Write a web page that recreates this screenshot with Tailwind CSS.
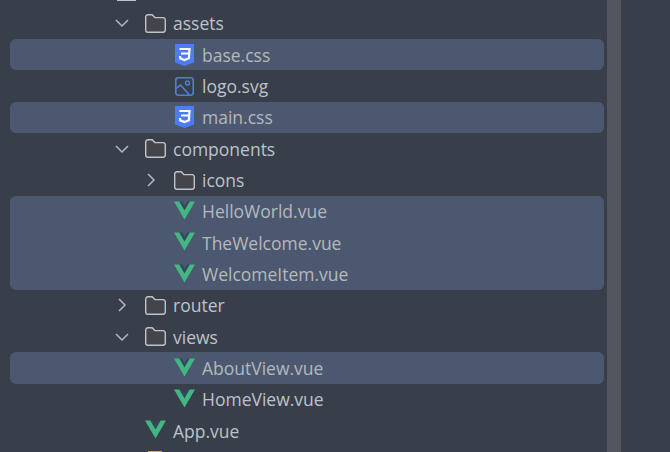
<!DOCTYPE html>
<html lang="en">
<head>
<meta charset="UTF-8">
<title>Project tree</title>
<script src="https://cdn.jsdelivr.net/npm/@tailwindcss/browser@4"></script>
</head>
<body class="m-0 w-[670px] h-[452px] overflow-hidden bg-[#383e4a] font-['Open_Sans','Noto_Sans',sans-serif] text-[17.5px] text-[#bcc3cc]">
<svg class="hidden">
  <symbol id="folder" viewBox="0 0 21 19"><path d="M.7 3a2.200 2.200 0 0 1 2.200-2.200h4.300l2.700 2.800h8a2.200 2.200 0 0 1 2.400 2.200v10a2.200 2.200 0 0 1-2.200 2.400H2.900A2.200 2.200 0 0 1 .7 16z" fill="#43454a" stroke="#c0c3c8" stroke-width="1.400"/></symbol>
  <symbol id="vue" viewBox="0 0 256 221"><path d="M60 0L128 118 196 0h-40L128 51.200 100 0z" fill="#35495e"/><path d="M192 0H256L128 220.800 0 0h64L128 112 192 0z" fill="#41b883"/></symbol>
  <symbol id="css" viewBox="0 0 19 22"><path d="M0 0h19v18.500L9.500 22 0 18.500z" fill="#4d7cf5"/><path d="M4.500 5h10l-.6 9.300-4.400 1.700-4.200-1.600-.2-2.400M6 9.500h8" fill="none" stroke="#fff" stroke-width="2.200"/></symbol>
  <symbol id="img" viewBox="0 0 19 19"><rect x=".8" y=".8" width="17.400" height="17.400" rx="2.500" fill="none" stroke="#4f7fd8" stroke-width="1.600"/><circle cx="12.500" cy="6" r="2" fill="none" stroke="#4f7fd8" stroke-width="1.400"/><path d="M1 11.500l4.500-3.500 9.500 10.500" fill="none" stroke="#4f7fd8" stroke-width="1.600"/></symbol>
  <symbol id="down" viewBox="0 0 16 16"><path d="M2 5l6 6 6-6" fill="none" stroke="#b4b8be" stroke-width="1.500"/></symbol>
  <symbol id="right" viewBox="0 0 16 16"><path d="M5 2l6 6-6 6" fill="none" stroke="#b4b8be" stroke-width="1.500"/></symbol>
</svg>

<div class="flex h-full overflow-hidden">
  <div class="w-[604px] shrink-0 -mt-[23.600px]">
    <div class="h-[31.330px] flex items-center pl-[117px]">
      <div class="w-[19px] h-[17px] border-b-2 border-[#c0c3c8]"></div>
    </div>

    <!-- assets -->
    <div class="h-[31.330px] flex items-center pl-[114px]">
      <svg class="w-4 h-4"><use href="#down"/></svg>
      <svg class="w-[21px] h-[19px] ml-[15px]"><use href="#folder"/></svg>
      <span class="ml-[7px]">assets</span>
    </div>
    <div class="ml-[10px] h-[31.330px] flex items-center pl-[165px] bg-[#4c5870] rounded-md text-[#b4b8bc]">
      <svg class="w-[19px] h-[22px]"><use href="#css"/></svg>
      <span class="ml-[8px]">base.css</span>
    </div>
    <div class="ml-[10px] h-[31.330px] flex items-center pl-[165px]">
      <svg class="w-[19px] h-[19px]"><use href="#img"/></svg>
      <span class="ml-[8px]">logo.svg</span>
    </div>
    <div class="ml-[10px] h-[31.330px] flex items-center pl-[165px] bg-[#4c5870] rounded-md text-[#b4b8bc]">
      <svg class="w-[19px] h-[22px]"><use href="#css"/></svg>
      <span class="ml-[8px]">main.css</span>
    </div>

    <!-- components -->
    <div class="h-[31.330px] flex items-center pl-[114px]">
      <svg class="w-4 h-4"><use href="#down"/></svg>
      <svg class="w-[21px] h-[19px] ml-[15px]"><use href="#folder"/></svg>
      <span class="ml-[7px]">components</span>
    </div>
    <div class="h-[31.330px] flex items-center pl-[143px]">
      <svg class="w-4 h-4"><use href="#right"/></svg>
      <svg class="w-[21px] h-[19px] ml-[15px]"><use href="#folder"/></svg>
      <span class="ml-[7px]">icons</span>
    </div>
    <div class="ml-[10px] bg-[#4c5870] rounded-md text-[#b4b8bc]">
      <div class="h-[31.330px] flex items-center pl-[164px]">
        <svg class="w-[21px] h-[19px] -mt-[2px]"><use href="#vue"/></svg>
        <span class="ml-[7px]">HelloWorld.vue</span>
      </div>
      <div class="h-[31.330px] flex items-center pl-[164px]">
        <svg class="w-[21px] h-[19px] -mt-[2px]"><use href="#vue"/></svg>
        <span class="ml-[7px]">TheWelcome.vue</span>
      </div>
      <div class="h-[31.330px] flex items-center pl-[164px]">
        <svg class="w-[21px] h-[19px] -mt-[2px]"><use href="#vue"/></svg>
        <span class="ml-[7px]">WelcomeItem.vue</span>
      </div>
    </div>

    <!-- router, views -->
    <div class="h-[31.330px] flex items-center pl-[114px]">
      <svg class="w-4 h-4"><use href="#right"/></svg>
      <svg class="w-[21px] h-[19px] ml-[15px]"><use href="#folder"/></svg>
      <span class="ml-[7px]">router</span>
    </div>
    <div class="h-[31.330px] flex items-center pl-[114px]">
      <svg class="w-4 h-4"><use href="#down"/></svg>
      <svg class="w-[21px] h-[19px] ml-[15px]"><use href="#folder"/></svg>
      <span class="ml-[7px]">views</span>
    </div>
    <div class="ml-[10px] h-[31.330px] flex items-center pl-[164px] bg-[#4c5870] rounded-md text-[#b4b8bc]">
      <svg class="w-[21px] h-[19px] -mt-[2px]"><use href="#vue"/></svg>
      <span class="ml-[7px]">AboutView.vue</span>
    </div>
    <div class="ml-[10px] h-[31.330px] flex items-center pl-[164px]">
      <svg class="w-[21px] h-[19px] -mt-[2px]"><use href="#vue"/></svg>
      <span class="ml-[7px]">HomeView.vue</span>
    </div>
    <div class="h-[31.330px] flex items-center pl-[145px]">
      <svg class="w-[21px] h-[19px] -mt-[2px]"><use href="#vue"/></svg>
      <span class="ml-[7px]">App.vue</span>
    </div>
    <div class="h-[31.330px] flex items-center pl-[148px]">
      <div class="w-[14px] h-[22px] bg-[#d9a93a]"></div>
    </div>
  </div>

  <div class="w-[14px] ml-[3px] bg-[#53565f]"></div>
</div>
</body>
</html>
